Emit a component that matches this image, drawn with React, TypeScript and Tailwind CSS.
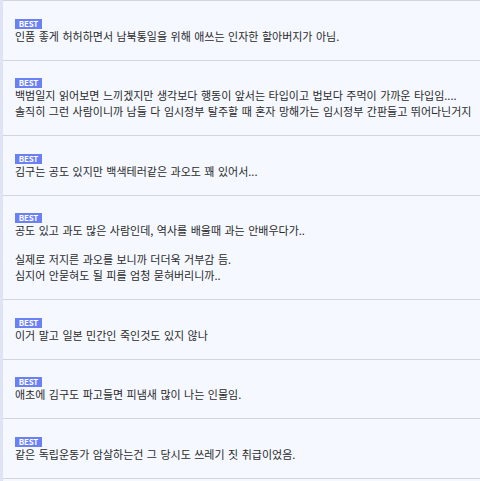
const comments: string[][] = [
  ["인품 좋게 허허하면서 남북통일을 위해 애쓰는 인자한 할아버지가 아님."],
  [
    "백범일지 읽어보면 느끼겠지만 생각보다 행동이 앞서는 타입이고 법보다 주먹이 가까운 타입임....",
    "솔직히 그런 사람이니까 남들 다 임시정부 탈주할 때 혼자 망해가는 임시정부 간판들고 뛰어다닌거지",
  ],
  ["김구는 공도 있지만 백색테러같은 과오도 꽤 있어서..."],
  [
    "공도 있고 과도 많은 사람인데, 역사를 배울때 과는 안배우다가..",
    "",
    "실제로 저지른 과오를 보니까 더더욱 거부감 듬.",
    "심지어 안묻혀도 될 피를 엄청 묻혀버리니까..",
  ],
  ["이거 말고 일본 민간인 죽인것도 있지 않나"],
  ["애초에 김구도 파고들면 피냄새 많이 나는 인물임."],
  ["같은 독립운동가 암살하는건 그 당시도 쓰레기 짓 취급이었음."],
];

function Best() {
  return (
    <span className="flex h-[10px] w-[27px] items-center justify-center bg-[#6b80f2] text-[8px] font-bold leading-none tracking-[-0.2px] text-white">
      BEST
    </span>
  );
}

export default function App() {
  return (
    <div
      className="min-h-[481px] w-[480px] border-l-[3px] border-[#dfe4f5] bg-[#f5f8fe] text-[#2a2a2a]"
      style={{ fontFamily: '"Noto Sans CJK KR", "Noto Sans", sans-serif' }}
    >
      {comments.map((lines, i) => (
        <div key={i} className="border-t border-[#d2d5da] pt-[17.5px] pb-[16px] pl-[12px] pr-2">
          <Best />
          <div className="-mt-px text-[11px] leading-[16px] [word-spacing:1px] whitespace-nowrap">
            {lines.map((l, j) =>
              l === "" ? <div key={j} className="h-[13px]" /> : <div key={j}>{l}</div>
            )}
          </div>
        </div>
      ))}
      <div className="border-t border-[#d2d5da]" />
    </div>
  );
}
